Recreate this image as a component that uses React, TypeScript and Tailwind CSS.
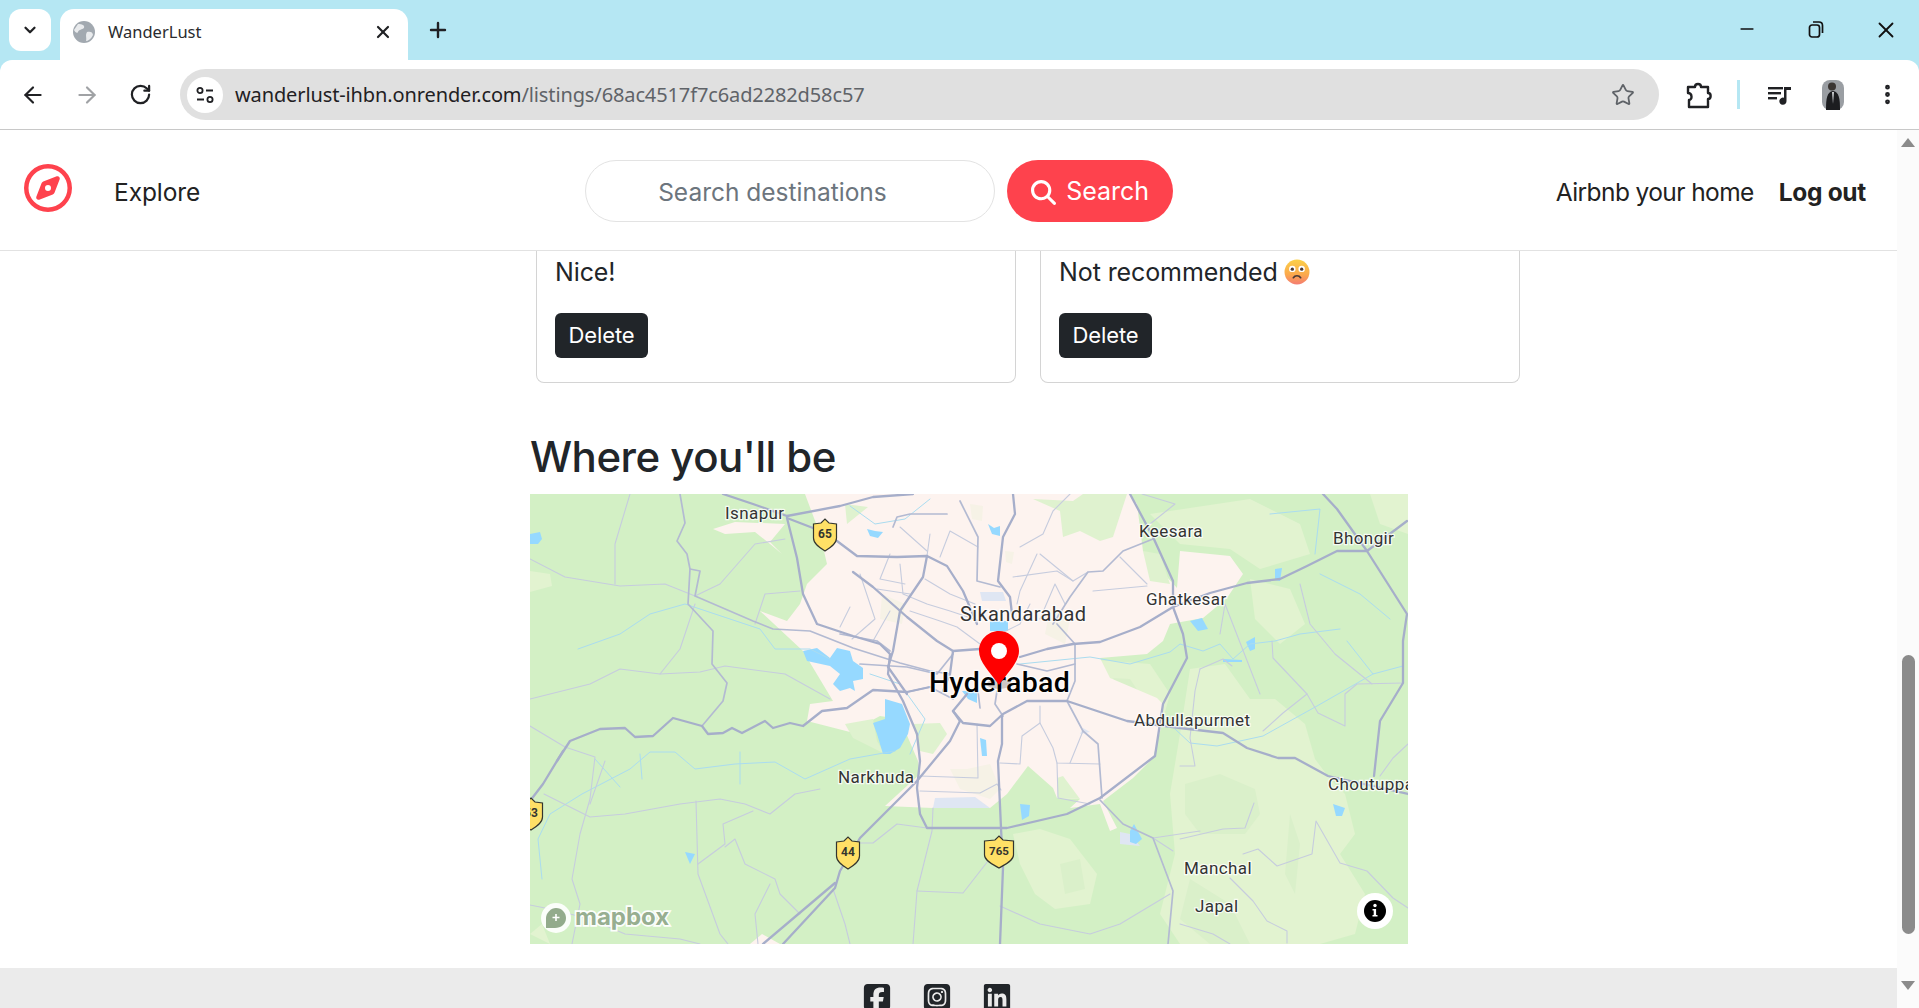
import { ArrowLeft, ArrowRight, RotateCw, Star, X, Plus, ChevronDown, Minus, EllipsisVertical } from 'lucide-react';
import { FaRegCompass, FaSquareFacebook, FaSquareInstagram, FaLinkedin, FaMagnifyingGlass } from 'react-icons/fa6';

const MAIN = '#a6aeca';
const MID = '#b3bad2';
const MINOR = '#c6ccde';
const RIVER = '#aadcf0';
const WATER = '#96d9ff';

const urban = [
  '275,0 600,0 607,10 613,57 647,94 650,57 700,62 713,80 697,104 673,124 640,130 633,147 617,160 570,164 580,184 627,204 633,210 632,230 623,264 603,284 573,307 587,334 580,337 570,310 540,314 550,305 527,304 523,294 498,272 477,300 460,314 403,314 355,312 390,280 388,267 370,225 350,222 320,238 277,227 280,210 303,207 273,157 230,117 257,127 270,110 277,90 297,70 290,40',
  '183,35 205,28 255,30 240,48 252,60 240,50 225,38 195,40',
  '220,450 232,440 250,450',
];

const lightGreen = [
  '503,5 543,7 553,0 597,0 583,43 570,47 550,37 533,43 530,17',
  '620,20 720,5 770,30 780,60 730,75 700,55 650,50',
  '840,0 878,0 878,40 850,30',
  '567,166 620,170 640,200 633,225 600,212 578,190',
  '660,175 695,170 720,205 745,205 775,230 785,265 800,285 815,300 825,340 810,360 835,400 825,440 790,450 650,450 630,420 645,360 640,300 650,240',
  '483,340 510,335 540,345 567,380 560,410 525,415 505,400 490,370',
  '0,77 20,80 22,92 0,98',
  '0,440 12,430 20,450',
  '720,85 760,95 775,130 750,150 725,125',
];

const darkPatch = [
  '655,290 690,280 725,295 730,320 715,340 670,340 655,320',
  '660,385 700,410 720,450 680,450 650,425',
  '530,370 550,365 555,395 535,400',
  '583,184 600,185 610,200 590,200',
  '760,320 770,350 765,400 755,380',
];

const greenInUrban = [
  '503,5 543,7 553,0 597,0 583,43 570,47 550,37 533,43 530,17',
  '613,57 630,60 640,90 620,87',
  '383,230 410,229 417,240 403,260 390,257',
  '315,230 343,225 347,247 355,260 323,244',
  '527,284 533,282 550,305 528,304',
  '315,10 338,13 317,30',
];

const palePatch = [
  '440,10 453,12 452,27 442,25',
  '352,100 375,110 372,130 350,125',
  '475,57 484,58 482,70 476,68',
  '420,275 437,275 460,270 470,295 460,305 430,295',
  '520,115 540,125 535,150 515,140',
];

const lakes = [
  '273,157 287,154 300,164 307,154 320,157 323,167 333,174 333,185 323,187 325,197 320,194 310,197 303,190 310,180 300,172 277,167',
  '355,205 372,210 380,230 378,240 370,254 360,260 353,260 347,240 343,229 355,225',
  '0,40 10,38 12,45 8,50 0,50',
  '337,35 345,37 353,38 348,44 340,42',
  '458,30 464,34 470,32 470,42 462,40',
  '460,127 478,127 478,137 460,137',
  '432,197 447,197 447,209 438,205',
  '450,244 456,246 457,262 452,262',
  '490,310 500,311 499,322 492,326',
  '600,337 604,330 612,345 606,350 600,348',
  '660,127 672,124 678,135 668,137',
  '716,148 725,143 725,155 720,157',
  '745,75 752,74 750,87 745,86',
  '803,310 815,314 812,322 806,322',
  '155,358 165,360 160,370',
  '693,165 712,166 712,168 693,168',
];

const paleWater = ['450,98 473,98 476,107 452,107', '405,304 445,303 460,314 403,314', '553,234 560,238 550,240', '590,338 600,340 610,352 590,350'];

const mainRoads = [
  '257,24 267,64 273,100 287,130 323,142 350,150 360,160 358,180 373,207 387,240 390,267 387,294 390,320 397,334 477,334 537,320 570,304 625,262 633,210 657,164 653,140 643,113 643,87 623,43 600,0',
  '257,24 283,34 307,47 327,62 367,63 397,62 417,72 433,97 447,130',
  '257,22 310,12 343,3 383,0',
  '193,0 223,10 257,22',
  '27,267 40,247 70,235 95,234 105,243 123,242 143,224 172,232 178,240 193,239 202,234 212,239 235,227 243,234 260,229 273,232 292,217 317,214 343,196 377,198 400,193',
  '33,257 13,290 0,307',
  '490,163 517,155 543,150 570,148 610,133 643,113 680,99 717,89 750,85 777,72 807,57 837,57 877,27',
  '793,0 807,15 837,57 877,120 873,147 873,189 850,227 844,282',
  '537,207 597,227 650,234 693,239 717,254 748,264 765,264 798,282 878,300',
  '483,0 485,20 473,43 468,87 480,103 482,120',
  '472,222 472,250 468,267 471,334 473,374 470,450',
  '397,62 393,83 370,117 363,157 358,173 377,200',
  '430,227 420,247 387,287 330,344 310,377 305,394 253,450',
  '305,389 233,450',
  '423,157 420,180 413,197',
  '423,217 433,229 460,232 473,220 497,207 537,207',
  '437,200 423,217 430,227',
  '450,155 423,157 407,147 377,123 343,93 323,78',
];

const midRoads = [
  '150,0 155,29 147,47 157,60 160,75 158,110 183,137 182,170 197,189 193,207 172,232',
  '160,75 170,77 165,102 223,127 243,135 280,137 323,154 370,169 400,177 420,180',
  '430,7 448,43 447,87 470,93',
  '623,45 593,57 573,77 558,78 540,103 523,130',
  '527,130 545,150 545,187 537,207',
  '537,207 553,237 568,250 572,304',
  '570,306 593,330 623,344 643,397 638,450',
  '310,140 347,147 360,157',
  '330,170 377,173 407,180 423,160',
  '377,198 400,193 423,205',
  '487,170 517,177 545,170',
  '363,33 367,23 380,20 417,20',
  '467,197 465,210 473,222',
  '448,197 450,214',
];

const minorRoads = [
  '370,33 397,57',
  '370,70 373,100 397,110 420,117 450,127',
  '380,117 410,127 427,133 450,150',
  '400,40 397,62',
  '410,63 420,37 448,53',
  '490,53 513,40 523,17 540,0',
  '507,60 490,97 487,110',
  '510,60 543,87 558,78',
  '483,83 527,77 543,87',
  '590,63 617,90',
  '563,97 617,92',
  '320,113 310,133',
  '343,147 360,117',
  '330,80 345,125 322,145',
  '347,95 380,100',
  '360,60 350,85 375,90',
  '445,110 420,100 395,85',
  '500,110 490,130 470,140',
  '535,110 525,90 510,125',
  '447,230 448,284 390,282',
  '390,297 450,299 467,290 471,296',
  '470,269 490,270 492,242 510,229 510,212',
  '510,229 523,254 527,269 570,270',
  '527,269 528,304 560,310',
  '553,237 540,269',
  '403,314 402,337 387,397 383,450',
  '387,397 433,399 458,367',
  '330,349 343,349 367,330 397,334',
  '623,344 670,337',
  '623,344 643,357',
  '0,65 35,83 90,92 135,90 165,102',
  '0,205 60,190 90,175 130,180 170,178 195,172 255,180 300,205',
  '100,0 85,50 85,90',
  '165,110 150,155 130,180',
  '165,102 190,90 225,50 255,45',
  '225,130 235,100 270,97',
  '0,232 35,253 65,263 60,305 50,340 42,385 50,410 42,450',
  '75,267 60,310',
  '14,300 60,323 95,320 150,310 190,305 215,310 240,320 265,300 290,295',
  '166,307 168,380 190,440 198,450',
  '168,370 195,350 193,330 223,317',
  '195,353 205,345 215,370 245,385 250,400 265,415 270,420',
  '240,390 225,420 228,450',
  '303,395 315,430 320,450',
  '742,147 743,164 777,200 788,219 815,232 815,200 827,190 873,189',
  '777,200 753,219 733,237',
  '670,175 665,197 660,244 665,272 650,272',
  '670,175 693,165 702,172',
  '650,345 693,335 715,334 724,309',
  '713,360 728,355 747,372 782,360 786,327 810,369 837,377 863,404 878,414',
  '700,384 723,407 737,427 757,437 757,449',
  '650,430 683,440 700,450',
  '878,250 863,264 850,282',
  '640,400 590,430 560,440 510,430 470,412',
  '690,140 695,110 730,200',
  '770,90 780,130 805,160 842,190',
  '-5,410 20,415 60,425 95,440 150,445 170,450',
  '612,0 645,10 620,30',
];

const rivers = [
  '48,155 90,140 120,120 155,110 200,125 230,135 245,155 280,155 300,165',
  '320,12 345,30 375,25 400,5',
  '340,180 370,190 395,225 380,260',
  '490,170 560,163 600,170 640,158 650,150 673,157 690,150 703,165 720,150 745,147 770,140 810,135',
  '740,20 790,15 785,60',
  '790,80 830,100 860,125',
  '817,147 843,180 873,172',
  '843,180 787,212 733,242 687,252 660,249 645,235',
  '12,385 8,345 20,320 52,300 100,275 120,258 145,258 165,275 205,270 245,268 275,285 320,265 365,257',
  '65,265 90,293',
  '110,260 112,285',
  '210,258 210,290',
];

function Poly({ list, fill }: { list: string[]; fill: string }) {
  return (
    <>
      {list.map((p, i) => (
        <polygon key={i} points={p} fill={fill} strokeLinejoin="round" />
      ))}
    </>
  );
}

function Roads({ list, color, width }: { list: string[]; color: string; width: number }) {
  return (
    <>
      {list.map((p, i) => (
        <polyline key={i} points={p} fill="none" stroke={color} strokeWidth={width} strokeLinejoin="round" strokeLinecap="round" />
      ))}
    </>
  );
}

function Label({ x, y, size = 17, weight = 400, color = '#333', children }: { x: number; y: number; size?: number; weight?: number; color?: string; children: string }) {
  return (
    <text x={x} y={y} fontSize={size} fontWeight={weight} fill={color} stroke="#fff" strokeOpacity={0.8} strokeWidth={2.5} paintOrder="stroke" fontFamily="Roboto, sans-serif" letterSpacing={0.4}>
      {children}
    </text>
  );
}

function Shield({ x, y, label, wide = false }: { x: number; y: number; label: string; wide?: boolean }) {
  const w = wide ? 14.5 : 11.5;
  return (
    <g transform={`translate(${x} ${y})`}>
      <path
        d={`M${-w} -11 L-4 -12 L0 -16 L4 -12 L${w} -11 L${w} 3 C${w} 9 5 13 0 16 C-5 13 ${-w} 9 ${-w} 3 Z`}
        fill="#ffe066"
        stroke="#33352f"
        strokeWidth={1.2}
      />
      <text x={0} y={3} textAnchor="middle" fontSize={wide ? 11.5 : 12} fontWeight={700} fill="#33352f" fontFamily="Roboto, sans-serif">
        {label}
      </text>
    </g>
  );
}

function MapView() {
  return (
    <div className="w-[878px] h-[450px] overflow-hidden shrink-0">
      <svg width="878" height="450" viewBox="0 0 878 450">
        <rect width="878" height="450" fill="#d3f0c5" />
        <Poly list={lightGreen} fill="#e2f3d0" />
        <Poly list={darkPatch} fill="#daf0ca" />
        <Poly list={urban} fill="#fdf3ef" />
        <Poly list={greenInUrban} fill="#dff2cf" />
        <Poly list={palePatch} fill="#f6f2e6" />
        <Poly list={paleWater} fill="#dfe6f3" />
        <Poly list={lakes} fill={WATER} />
        <Roads list={rivers} color={RIVER} width={1} />
        <Roads list={minorRoads} color={MINOR} width={1.1} />
        <Roads list={midRoads} color={MID} width={1.7} />
        <Roads list={mainRoads} color={MAIN} width={2.3} />

        <Label x={195} y={25}>Isnapur</Label>
        <Label x={609} y={43}>Keesara</Label>
        <Label x={803} y={50}>Bhongir</Label>
        <Label x={430} y={127} size={20}>Sikandarabad</Label>
        <Label x={616} y={111}>Ghatkesar</Label>
        <Label x={604} y={232}>Abdullapurmet</Label>
        <Label x={308} y={289}>Narkhuda</Label>
        <Label x={798} y={296}>Choutuppal</Label>
        <Label x={654} y={380}>Manchal</Label>
        <Label x={665} y={418}>Japal</Label>
        <Label x={399} y={198} size={28.5} weight={500} color="#000">Hyderabad</Label>

        <Shield x={295} y={41} label="65" />
        <Shield x={318} y={359} label="44" />
        <Shield x={469} y={358} label="765" wide />
        <Shield x={1} y={320} label="53" />

        <ellipse cx={469} cy={190} rx={12} ry={5} fill="#000" opacity={0.18} />
        <path d="M469 137 C480 137 489 146 489 157 C489 168 478 178 469 191 C460 178 449 168 449 157 C449 146 458 137 469 137 Z" fill="#f00" />
        <circle cx={469} cy={157} r={8} fill="#fff" />

        <circle cx={26} cy={424} r={15} fill="#fff" opacity={0.9} />
        <path d="M26 414 C32 414 36 419 36 424 C36 430 31 434 25 434 L16 434 L16 424 C16 419 21 414 26 414 Z" fill="#93ab8c" />
        <path d="M26 420 v7 M22.5 423.5 h7" stroke="#fff" strokeWidth={1.6} />
        <text x={45} y={431} fontSize={24} fontWeight={700} fill="#94ab8e" stroke="#fff" strokeWidth={3.4} paintOrder="stroke" fontFamily="Inter, sans-serif" opacity={0.95}>
          mapbox
        </text>

        <circle cx={845} cy={417} r={18} fill="#fff" />
        <circle cx={845} cy={417} r={11} fill="#000" />
        <circle cx={845} cy={411.5} r={1.7} fill="#fff" />
        <path d="M842.5 415 h3.6 v6 h1.4 v1.6 h-5 v-1.6 h1.2 v-4.4 h-1.2 Z" fill="#fff" />
      </svg>
    </div>
  );
}

function WorriedEmoji() {
  return (
    <svg width="26" height="26" viewBox="0 0 25 25" className="inline-block ml-[6px] -mt-1 align-middle">
      <defs>
        <linearGradient id="face" x1="0" y1="0" x2="0" y2="1">
          <stop offset="0" stopColor="#fbd049" />
          <stop offset="0.6" stopColor="#fba94c" />
          <stop offset="1" stopColor="#f47c72" />
        </linearGradient>
      </defs>
      <circle cx="12.5" cy="12.5" r="12" fill="url(#face)" />
      <circle cx="8" cy="9.5" r="3.1" fill="#fff" />
      <circle cx="17" cy="9.5" r="3.1" fill="#fff" />
      <circle cx="8" cy="9.8" r="1.6" fill="#4a3a36" />
      <circle cx="17" cy="9.8" r="1.6" fill="#4a3a36" />
      <path d="M9 18 C10.5 15.5 14.5 15.5 16 18" fill="none" stroke="#4a3a36" strokeWidth="1.6" strokeLinecap="round" />
    </svg>
  );
}

function ReviewCard({ text, emoji = false }: { text: string; emoji?: boolean }) {
  return (
    <div className="w-[480px] h-[132px] border border-t-0 border-[#d4d4d4] rounded-b-[8px] px-[18px] pt-[3px]">
      <p className="text-[25px] leading-[36px] tracking-[-0.1px] text-[#212529] h-[59px]">
        {text}
        {emoji && <WorriedEmoji />}
      </p>
      <button className="w-[93px] h-[45px] rounded-[6px] bg-[#212529] text-white text-[22px] tracking-[-0.1px]">Delete</button>
    </div>
  );
}

function BrowserChrome() {
  return (
    <div className="shrink-0 font-['Noto_Sans',sans-serif]">
      <div className="h-[60px] bg-[#b5e7f3] flex items-start pl-[9px]">
        <div className="w-[42px] h-[42px] mt-[9px] rounded-[12px] bg-white flex items-center justify-center">
          <ChevronDown size={18} strokeWidth={3} color="#202124" />
        </div>
        <div className="w-[348px] h-[51px] mt-[9px] ml-[9px] rounded-t-[14px] bg-white flex items-center pl-[13px] pr-[15px] pb-[5px]">
          <svg width="22" height="22" viewBox="0 0 22 22" className="shrink-0">
            <circle cx="11" cy="11" r="11" fill="#a2a9b0" />
            <path d="M5 3 C9 3 12 4 11 7 C9 9 6 8 5 11 C4 13 2 11 1 9 Z M14 11 C17 10 20 11 20 14 C18 18 15 20 13 20 C14 17 12 14 14 11 Z" fill="#e9ebed" />
          </svg>
          <span className="ml-[13px] text-[16.5px] text-[#2a2b2e] flex-1">WanderLust</span>
          <X size={20} strokeWidth={2.6} color="#202124" />
        </div>
        <Plus size={24} strokeWidth={2.4} color="#202124" className="ml-[18px] mt-[18px]" />
        <div className="flex-1" />
        <Minus size={20} strokeWidth={2} color="#111" className="mt-[19px]" />
        <svg width="18" height="18" viewBox="0 0 18 18" className="ml-[50px] mt-[20px]" fill="none" stroke="#111" strokeWidth="1.7">
          <rect x="2.5" y="5" width="10" height="12" rx="2.5" />
          <path d="M6 2 H12 Q15.5 2 15.5 5.5 V13" />
        </svg>
        <X size={26} strokeWidth={1.7} color="#111" className="ml-[48px] mr-[20px] mt-[17px]" />
      </div>
      <div className="h-[70px] bg-[#b5e7f3]">
        <div className="h-[70px] bg-white rounded-t-[12px] border-b border-[#c8c8c8] flex items-center pl-[20px]">
          <ArrowLeft size={26} strokeWidth={2} color="#202124" />
          <ArrowRight size={26} strokeWidth={2} color="#a0a2a5" className="ml-[28px]" />
          <RotateCw size={23} strokeWidth={2.3} color="#202124" className="ml-[29px]" />
          <div className="ml-[28px] w-[1479px] h-[51px] rounded-full bg-[#e0e0e0] flex items-center pl-[7px] pr-[24px]">
            <div className="w-[36px] h-[36px] rounded-full bg-white flex items-center justify-center shrink-0">
              <svg width="20" height="20" viewBox="0 0 20 20" fill="none" stroke="#202124" strokeWidth="1.8">
                <circle cx="5" cy="5.5" r="2.6" />
                <path d="M11 5.5 H18 M2 14.5 H9" />
                <circle cx="15" cy="14.5" r="2.6" />
              </svg>
            </div>
            <span className="ml-[12px] text-[20px] tracking-[-0.12px] text-[#1f2023] whitespace-nowrap flex-1">
              wanderlust-ihbn.onrender.com<span className="text-[#5f6368]">/listings/68ac4517f7c6ad2282d58c57</span>
            </span>
            <Star size={24} strokeWidth={1.8} color="#5f6368" />
          </div>
          <svg width="26" height="28" viewBox="0 0 26 28" className="ml-[27px]" fill="none" stroke="#202124" strokeWidth="2.4" strokeLinejoin="round">
            <path d="M2 6 H9 C9 2 15 2 15 6 H22 V12 C25.5 12 25.5 18 22 18 V26 H3 V19 C6.5 19 6.5 12 2 12 Z" />
          </svg>
          <div className="w-[3px] h-[29px] ml-[25px] bg-[#b5e7f3]" />
          <svg width="24" height="24" viewBox="0 0 24 24" className="ml-[28px]" fill="#202124">
            <rect x="0" y="4" width="15" height="2.4" />
            <rect x="0" y="9" width="13" height="2.4" />
            <rect x="0" y="14" width="9" height="2.4" />
            <path d="M16 4 H23 V7 H18.5 V18 A3.6 3.6 0 1 1 16 14.8 Z" />
          </svg>
          <svg width="22" height="30" viewBox="0 0 22 30" className="ml-[30px]">
            <rect width="22" height="30" rx="8" fill="#9a9ea3" />
            <path d="M4 30 C4 18 5 12 11 11 C17 12 18 18 18 30 Z" fill="#1c1d20" />
            <path d="M10 12 L11 24 L12 12 Z" fill="#cfd2d4" />
            <circle cx="10" cy="6.5" r="4" fill="#3a3532" />
          </svg>
          <EllipsisVertical size={25} strokeWidth={2.6} color="#202124" className="ml-[31px]" />
        </div>
      </div>
    </div>
  );
}

function Navbar() {
  return (
    <nav className="h-[121px] shrink-0 border-b border-[#e2e2e2] bg-white flex items-center pl-[24px] pr-[31px] pt-[2px] text-[#222]">
      <FaRegCompass size={48} color="#fe424d" className="shrink-0 -mt-[6px]" />
      <span className="ml-[42px] text-[24.5px] tracking-[-0.1px] pt-[2px]">Explore</span>
      <div className="ml-[385px] w-[410px] h-[62px] rounded-full border border-[#e3e3e3] flex items-center pl-[72px] pt-[3px] text-[24.5px] text-[#6c757d]">
        Search destinations
      </div>
      <button className="ml-[12px] w-[166px] h-[62px] rounded-full bg-[#fe424d] text-white flex items-center justify-center gap-[10px] pt-[2px] text-[25px]">
        <FaMagnifyingGlass size={25} />
        Search
      </button>
      <div className="flex-1" />
      <span className="text-[24.5px] tracking-[-0.6px] pt-[2px]">Airbnb your home</span>
      <span className="ml-[25px] text-[24.5px] font-bold tracking-[-0.3px] pt-[2px]">Log out</span>
    </nav>
  );
}

function PageScrollbar() {
  return (
    <div className="w-[22px] shrink-0 bg-[#fbfbfb] flex flex-col items-center">
      <div className="mt-[8px] w-0 h-0 border-l-[7px] border-r-[7px] border-b-[9px] border-l-transparent border-r-transparent border-b-[#8b8b8b]" />
      <div className="mt-[508px] w-[13px] h-[279px] rounded-full bg-[#8b8b8b]" />
      <div className="mt-[47px] w-0 h-0 border-l-[7px] border-r-[7px] border-t-[9px] border-l-transparent border-r-transparent border-t-[#8b8b8b]" />
    </div>
  );
}

export default function App() {
  return (
    <div className="w-[1919px] h-[1008px] overflow-hidden flex flex-col bg-white">
      <BrowserChrome />
      <div className="flex-1 flex min-h-0 font-['Inter',sans-serif]">
        <div className="flex-1 min-w-0 flex flex-col">
          <Navbar />
          <div className="flex gap-[24px] pl-[536px] shrink-0">
            <ReviewCard text="Nice!" />
            <ReviewCard text="Not recommended" emoji />
          </div>
          <div className="pl-[530px] pt-[44px] shrink-0">
            <h2 className="text-[42px] leading-[60px] font-medium tracking-[-0.5px] text-[#212529] h-[67px]">Where you'll be</h2>
            <MapView />
          </div>
          <footer className="mt-[24px] flex-1 bg-[#ebebeb] flex justify-center gap-[30px] pt-[14px] pr-[24px]">
            <FaSquareFacebook size={30} color="#212529" />
            <FaSquareInstagram size={30} color="#212529" />
            <FaLinkedin size={30} color="#212529" />
          </footer>
        </div>
        <PageScrollbar />
      </div>
    </div>
  );
}
